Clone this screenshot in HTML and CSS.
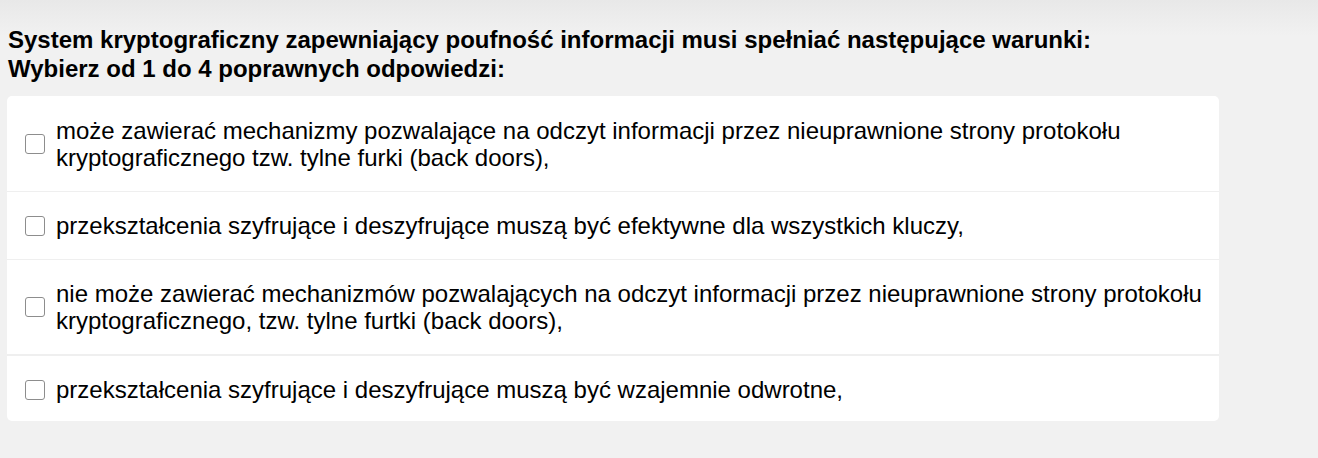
FILE: index.html
```html
<!DOCTYPE html>
<html lang="pl">
<head>
<meta charset="utf-8">
<link rel="stylesheet" href="styles.css">
</head>
<body>
<div class="page">
  <div class="question">
    <div class="q-text">System kryptograficzny zapewniający poufność informacji musi spełniać następujące warunki:</div>
    <div class="q-hint">Wybierz od 1 do 4 poprawnych odpowiedzi:</div>
  </div>
  <div class="answers">
    <label class="answer"><input type="checkbox" class="cb"><span class="a-text">może zawierać mechanizmy pozwalające na odczyt informacji przez nieuprawnione strony protokołu kryptograficznego tzw. tylne furki (back doors),</span></label>
    <label class="answer"><input type="checkbox" class="cb"><span class="a-text">przekształcenia szyfrujące i deszyfrujące muszą być efektywne dla wszystkich kluczy,</span></label>
    <label class="answer answer-thick"><input type="checkbox" class="cb"><span class="a-text">nie może zawierać mechanizmów pozwalających na odczyt informacji przez nieuprawnione strony protokołu kryptograficznego, tzw. tylne furtki (back doors),</span></label>
    <label class="answer"><input type="checkbox" class="cb"><span class="a-text">przekształcenia szyfrujące i deszyfrujące muszą być wzajemnie odwrotne,</span></label>
  </div>
</div>
</body>
</html>
```
FILE: styles.css
```css
html, body {
  margin: 0;
  padding: 0;
}
body {
  font-family: "Liberation Sans", Arial, sans-serif;
  color: #000;
  background: linear-gradient(#e8e8e8 0px, #f1f1f1 36px) no-repeat, #f1f1f1;
  min-height: 458px;
}
.page {
  padding: 25px 0 0 7px;
  width: 1212px;
}
.question {
  padding-left: 1px;
  font-weight: bold;
  font-size: 24px;
  line-height: 29px;
  margin-bottom: 13px;
}
.answers {
  background: #fff;
  border-radius: 5px;
  display: flex;
  flex-direction: column;
}
.answer {
  display: flex;
  align-items: center;
  gap: 11px;
  padding: 20px 8px 20px 18px;
  font-size: 24px;
  line-height: 27px;
  border-bottom: 1px solid #efefef;
}
.answer:first-child {
  padding-top: 21px;
}
.answer-thick {
  border-bottom-width: 2px;
}
.answer:last-child {
  border-bottom: none;
  padding-bottom: 18px;
}
.cb {
  appearance: none;
  -webkit-appearance: none;
  flex: none;
  width: 20px;
  height: 20px;
  margin: 0;
  border: 1px solid #8d8d8d;
  border-radius: 3px;
  background: #fff;
}
.a-text {
  flex: 1;
}
```
